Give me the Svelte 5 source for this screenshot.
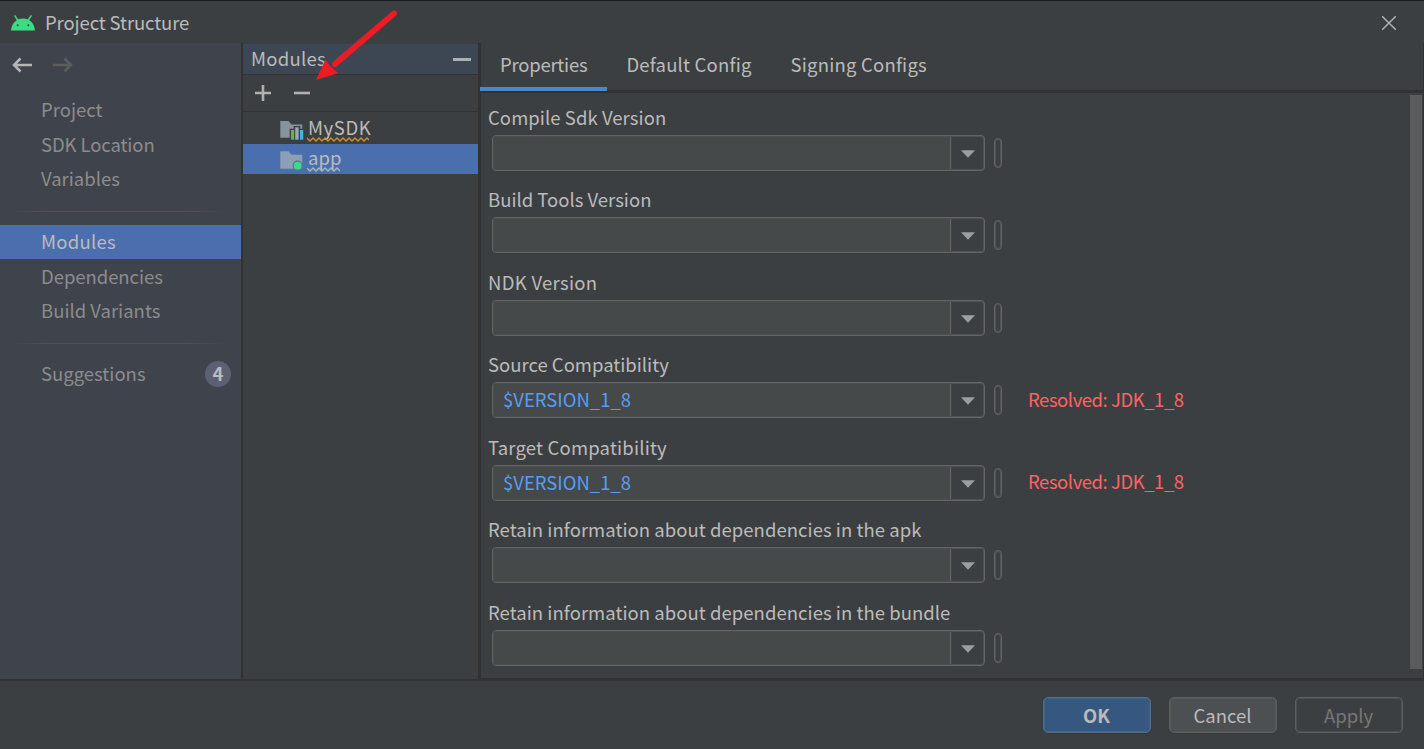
<script>
  const navGroups = [
    [{ text: 'Project' }, { text: 'SDK Location', track: -0.1 }, { text: 'Variables' }],
    [{ text: 'Modules', track: 0.28, selected: true }, { text: 'Dependencies', track: -0.05 }, { text: 'Build Variants' }],
    [{ text: 'Suggestions', count: 4 }]
  ];
  const tabs = [
    { text: 'Properties', track: -0.24 },
    { text: 'Default Config', track: 0.2 },
    { text: 'Signing Configs', track: 0.2 }
  ];
  const version = '$VERSION_1_8';
  const resolved = 'Resolved: JDK_1_8';
  const fields = [
    { label: 'Compile Sdk Version', track: 0.06 },
    { label: 'Build Tools Version' },
    { label: 'NDK Version', track: 0.3 },
    { label: 'Source Compatibility' },
    { label: 'Target Compatibility', track: 0.18 },
    { label: 'Retain information about dependencies in the apk', track: 0.04 },
    { label: 'Retain information about dependencies in the bundle', track: 0.04 }
  ].map((f, i) => (i === 3 || i === 4 ? { ...f, value: version, resolved } : f));
</script>

<div class="dialog">
  <header class="titlebar">
    <svg class="android" width="24" height="16" viewBox="0 0 24 16">
      <path d="M4 .8L6.600 5M20 .8L17.400 5" stroke="#3ddc84" stroke-width="1.500" stroke-linecap="round" />
      <path d="M0 15.600C.5 8.300 5.500 3.500 12 3.500S23.500 8.300 24 15.600Z" fill="#3ddc84" />
      <circle cx="6.700" cy="10.300" r="1" fill="#24543e" /><circle cx="17.300" cy="10.300" r="1" fill="#24543e" />
    </svg>
    <span class="title">Project Structure</span>
    <svg class="close" width="16" height="16" viewBox="0 0 16 16"><path d="M1.200 1.200L14.800 14.800M14.800 1.200L1.200 14.800" stroke="#b4b6b7" stroke-width="1.400" /></svg>
  </header>

  <main class="body">
    <nav class="sidebar">
      <div class="history">
        <svg width="20" height="16" viewBox="0 0 20 16"><path d="M20 8H2M8.500 1.500L2 8L8.500 14.500" fill="none" stroke="#b4b6b8" stroke-width="2.500" /></svg>
        <svg width="20" height="16" viewBox="0 0 20 16"><path d="M0 8H18M11.500 1.500L18 8L11.500 14.500" fill="none" stroke="#5b5d5f" stroke-width="2.500" /></svg>
      </div>
      {#each navGroups as group, i}
        {#if i > 0}<div class="separator"></div>{/if}
        <div class="group">
          {#each group as item}
            <div class="nav-item" class:selected={item.selected}>
              <span style:letter-spacing="{item.track ?? 0}px">{item.text}</span>
              {#if item.count}<b class="count">{item.count}</b>{/if}
            </div>
          {/each}
        </div>
      {/each}
    </nav>

    <section class="modules">
      <div class="modules-head"><span>Modules</span><i class="collapse"></i></div>
      <div class="tools">
        <svg width="16" height="16" viewBox="0 0 16 16"><path d="M8 0V16M0 8H16" stroke="#afb1b3" stroke-width="2.600" /></svg>
        <svg width="16" height="16" viewBox="0 0 16 16"><path d="M0 8H16" stroke="#afb1b3" stroke-width="2.600" /></svg>
      </div>
      <div class="tree">
        <div class="module">
          <svg width="24" height="24" viewBox="0 0 24 24">
            <path d="M.3 4H8.500L11.500 7.500H22.300V20.700H.3Z" fill="#87939a" />
            <path d="M9.700 24V11.700H13.700V9H20.300V11.700H24V24Z" fill="#3c3f41" />
            <path d="M11 13H14.200V22.700H11Z" fill="#62b543" />
            <path d="M15.200 10.300H18.700V22.700H15.200Z" fill="#9aa7b0" />
            <path d="M20 13H23.200V22.700H20Z" fill="#40b6e0" />
          </svg>
          <span class="name sdk">MySDK<svg class="wave" width="62" height="5" viewBox="0 0 62 5"><path d="M0 1L3 4L6 1L9 4L12 1L15 4L18 1L21 4L24 1L27 4L30 1L33 4L36 1L39 4L42 1L45 4L48 1L51 4L54 1L57 4L60 1L62 3" fill="none" stroke="#d08f2a" stroke-width="1.300" /></svg></span>
        </div>
        <div class="module selected">
          <svg width="24" height="24" viewBox="0 0 24 24">
            <path d="M.3 4.300H8.500L11.500 7.800H22.300V21.700H.3Z" fill="#8d9fb5" />
            <circle cx="17.700" cy="18.700" r="5.100" fill="#4b6eaf" /><circle cx="17.700" cy="18.700" r="3.900" fill="#3ddc84" />
          </svg>
          <span class="name">app<svg class="wave" width="33" height="5" viewBox="0 0 33 5"><path d="M0 1L3 4L6 1L9 4L12 1L15 4L18 1L21 4L24 1L27 4L30 1L33 4" fill="none" stroke="#adb5c2" stroke-width="1.300" /></svg></span>
        </div>
      </div>
    </section>

    <section class="details">
      <div class="tabs">
        {#each tabs as tab, i}
          <div class="tab" class:active={i === 0}><span style:letter-spacing="{tab.track}px">{tab.text}</span></div>
        {/each}
      </div>
      <div class="pane">
        <div class="form">
          {#each fields as f}
            <div class="field">
              <div class="label"><span style:letter-spacing="{f.track ?? 0}px">{f.label}</span></div>
              <div class="control">
                <div class="combo">
                  <div class="value">{f.value ?? ''}</div>
                  <div class="drop"><svg width="14" height="8" viewBox="0 0 14 8"><path d="M0 .2H14L7 7.700Z" fill="#9b9fa1" /></svg></div>
                </div>
                <i class="pill"></i>
                {#if f.resolved}<span class="resolved">{f.resolved}</span>{/if}
              </div>
            </div>
          {/each}
        </div>
        <div class="scrollbar"></div>
      </div>
    </section>
  </main>

  <footer class="actions">
    <button class="ok">OK</button>
    <button class="cancel">Cancel</button>
    <button class="apply" disabled>Apply</button>
  </footer>

  <svg class="pointer" width="90" height="76" viewBox="0 0 90 76">
    <path d="M82 8.500L23 59" stroke="#ed1c24" stroke-width="5.800" stroke-linecap="round" />
    <path d="M4 75L13.500 54.500L16.500 59L23.500 66L26.500 68Z" fill="#ed1c24" />
  </svg>
</div>

<style>
  :global(body) { background: #3c3f41; overflow: hidden; }
  .dialog {
    position: relative; box-sizing: border-box; width: 1424px; height: 749px;
    display: flex; flex-direction: column; border-top: 1px solid #1b1c1d;
    background: #3c3f41; color: #bbbbbb; white-space: nowrap;
    font: 400 18.500px/22px "Noto Sans CJK SC", "Noto Sans", sans-serif;
  }
  .dialog svg { display: block; flex: none; }
  .titlebar { flex: 0 0 42px; display: flex; align-items: center; padding: 2px 27px 0 11px; box-sizing: border-box; }
  .title { margin: -2px 0 0 10px; letter-spacing: -.12px; }
  .close { margin-left: auto; }
  .body { flex: 0 0 636px; min-height: 0; display: flex; }

  .sidebar { width: 241px; background: #3f434c; border-right: 2px solid #323232; color: #8c8c8c; }
  .history { display: flex; gap: 21px; padding: 14px 0 0 12px; height: 20px; margin-bottom: 16px; }
  .nav-item { height: 34.500px; padding: 0 10px 0 41px; display: flex; align-items: center; justify-content: space-between; }
  .nav-item > span { margin-top: -2px; }
  .nav-item.selected { background: #4b6eaf; color: #bbbbbb; height: 34px; margin-bottom: .5px; }
  .separator { height: 1px; margin: 14px 12px 13.500px; background: linear-gradient(90deg, transparent, #515151 15%, #515151 80%, transparent); }
  .count { width: 26px; height: 26px; border-radius: 50%; background: #5c6072; color: #bbbbbb; text-align: center; line-height: 24px; }

  .modules { width: 235px; border-right: 3px solid #323232; }
  .modules-head { height: 30px; margin-top: 1px; padding: 0 7px 0 8px; display: flex; align-items: center; justify-content: space-between; background: #3d4754; border-bottom: 1px solid #323232; }
  .modules-head span { margin-top: -2px; letter-spacing: .28px; }
  .collapse { width: 18px; height: 3px; background: #adb0b3; }
  .tools { height: 36px; display: flex; align-items: center; gap: 23px; padding-left: 12px; border-bottom: 1px solid #323232; }
  .tree { padding-top: 2px; }
  .module { height: 30px; padding-left: 37px; display: flex; align-items: center; gap: 4px; }
  .module.selected { background: #4b6eaf; }
  .name { position: relative; margin-top: -4px; }
  .sdk { letter-spacing: .6px; }
  .wave { position: absolute; left: -1px; bottom: -4px; }

  .details { flex: 1; min-width: 0; display: flex; flex-direction: column; border-right: 1px solid #323232; }
  .tabs { flex: none; height: 47px; display: flex; border-bottom: 3px solid #323232; }
  .tab { position: relative; height: 44px; padding: 0 20px 0 19px; display: flex; align-items: center; }
  .tab > span { margin-top: -2px; }
  .tab.active::after { content: ""; position: absolute; left: -1px; right: 0; bottom: -4px; height: 4px; background: #4a88c7; }
  .pane { flex: 1; min-height: 0; display: flex; justify-content: space-between; border-bottom: 1px solid #323232; }
  .form { padding: 12.800px 0 0 7px; }
  .field { height: 82.500px; }
  .label { height: 29px; }
  .control { display: flex; align-items: center; height: 36px; padding-left: 4px; }
  .combo { box-sizing: border-box; width: 493px; height: 36px; display: flex; border: 1px solid #646464; border-radius: 4px; background: #3c3f41; overflow: hidden; box-shadow: inset 0 0 0 1px rgb(100 100 100 / .5); }
  .value { flex: 1; margin: 1px 0 1px 1px; background: #45494a; box-shadow: 0 0 0 1px rgb(69 73 74 / .5); color: #589df6; padding-left: 9px; line-height: 30px; border-right: 1px solid #646464; }
  .drop { width: 33px; display: grid; place-items: center; padding-top: 2px; box-sizing: border-box; }
  .pill { box-sizing: border-box; width: 8px; height: 30px; margin-left: 9px; border: 1px solid #646464; border-radius: 4px; box-shadow: inset 0 0 0 1px rgb(100 100 100 / .5); }
  .resolved { color: #ff6464; margin: -3px 0 0 26px; letter-spacing: -.45px; }
  .scrollbar { width: 12px; height: 574px; margin: 2px 1px 0 0; background: #595b5c; }

  .actions { flex: 1; display: flex; justify-content: flex-end; align-items: flex-start; gap: 18px; padding: 16px 21.500px 0 0; border-top: 2px solid #323232; }
  button { box-sizing: border-box; width: 108px; height: 36px; padding: 0 0 1px; border: 1px solid #5e6060; border-radius: 5px; font: inherit; color: #bbbbbb; background: #4c5052; box-shadow: inset 0 0 0 1px rgb(94 96 96 / .5), 0 1px 1px #35383a; }
  .ok { font-weight: 700; background: #365880; border-color: #4c708c; box-shadow: inset 0 0 0 1px rgb(76 112 140 / .5), 0 1px 1px #35383a; }
  .apply { background: transparent; color: #777777; box-shadow: inset 0 0 0 1px rgb(94 96 96 / .5); }
  .pointer { position: absolute; left: 312px; top: 4px; }
</style>
